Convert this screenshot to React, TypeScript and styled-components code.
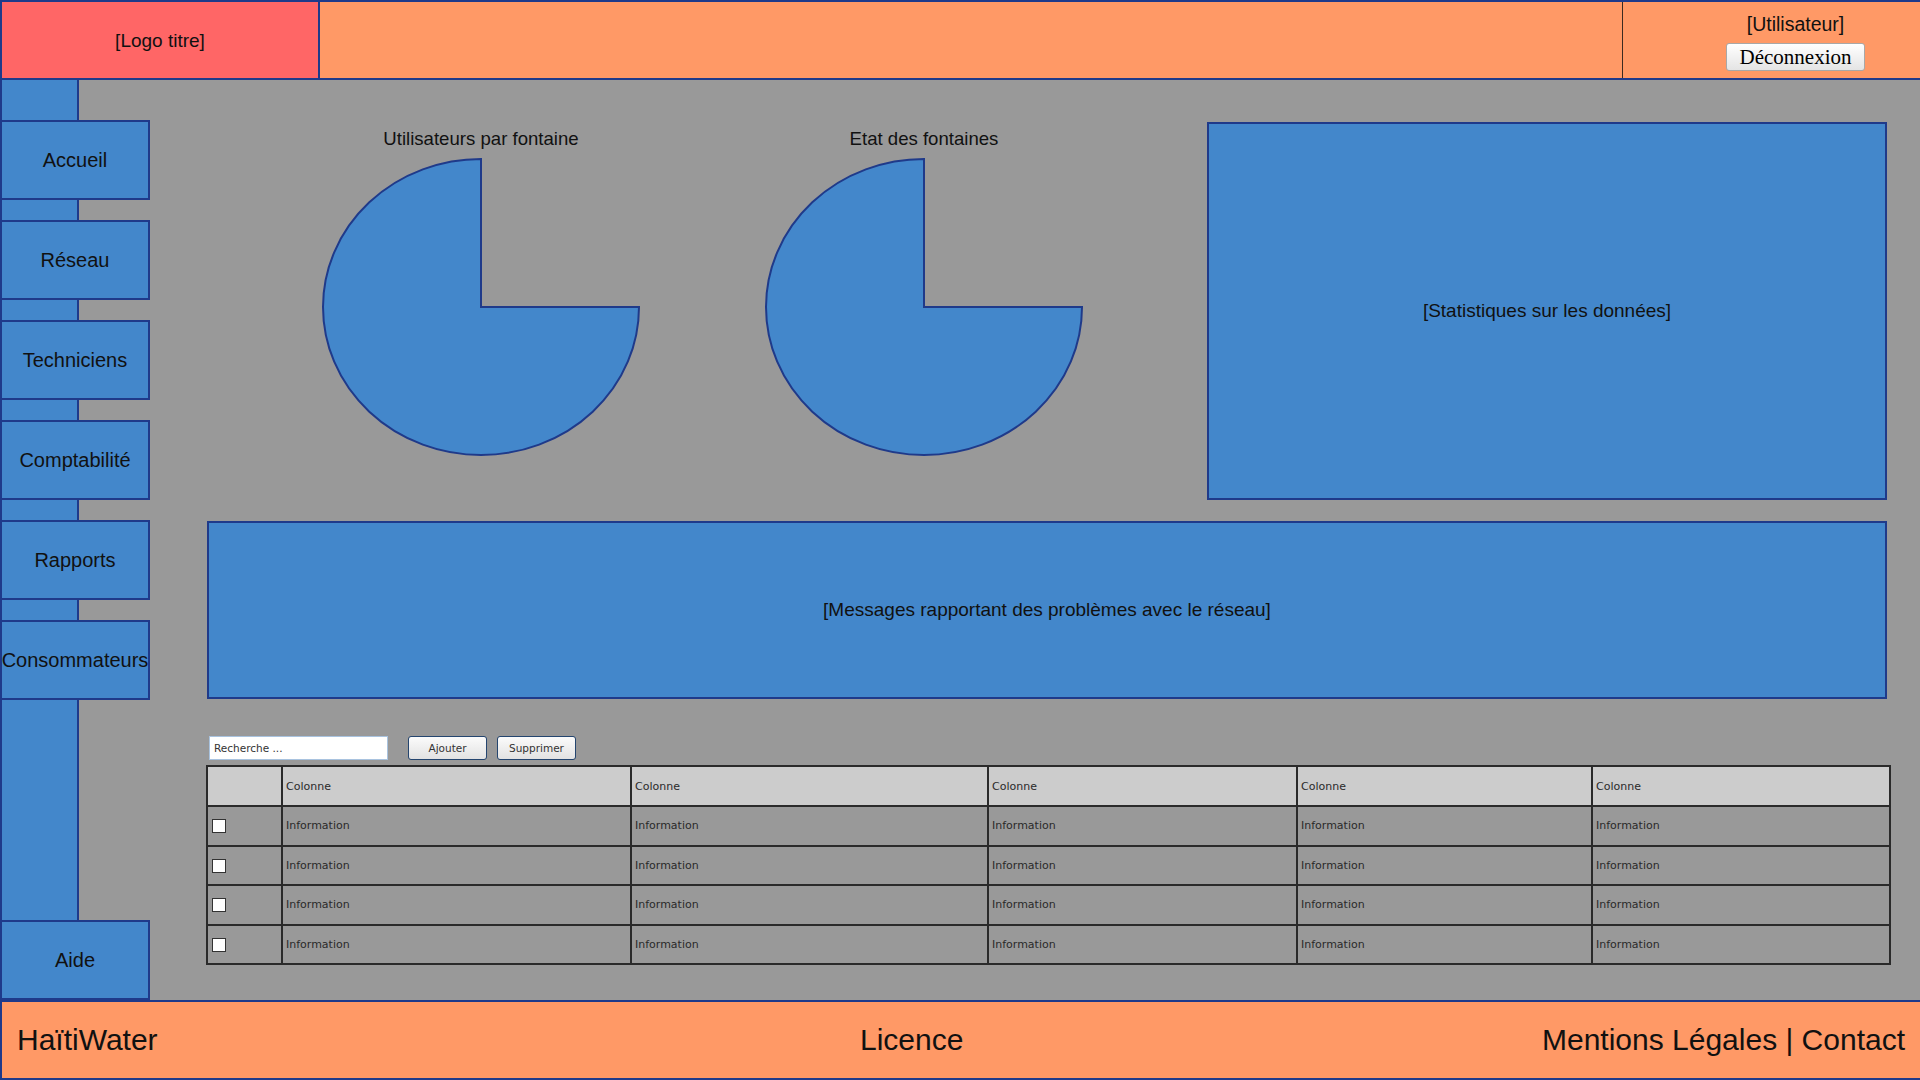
import React from "react";
import styled, { createGlobalStyle } from "styled-components";

const BLUE = "#4387cb";
const DARK = "#1f3a8a";
const ORANGE = "#ff9966";
const RED = "#ff6666";
const GRAY = "#999999";

const Global = createGlobalStyle`
  html, body { margin: 0; padding: 0; }
  body {
    width: 1920px;
    height: 1080px;
    overflow: hidden;
    background: ${GRAY};
    font-family: "Liberation Sans", Arial, sans-serif;
    color: #111;
  }
  * { box-sizing: border-box; }
`;

const Page = styled.div`
  width: 1920px;
  height: 1080px;
  display: grid;
  grid-template-rows: 80px 920px 80px;
  background: ${GRAY};
`;

const Header = styled.header`
  display: flex;
  border: 2px solid ${DARK};
  background: ${ORANGE};
`;

const Logo = styled.div`
  width: 318px;
  display: flex;
  align-items: center;
  justify-content: center;
  padding-top: 2px;
  background: ${RED};
  border-right: 2px solid ${DARK};
  font-size: 19px;
`;

const HeaderSpacer = styled.div`
  flex: 1;
`;

const UserPanel = styled.div`
  width: 298px;
  border-left: 1px solid #3b2a20;
  display: flex;
  flex-direction: column;
  align-items: center;
  padding: 11px 0 0 48px;
  gap: 8px;
`;

const UserName = styled.div`
  font-size: 19.5px;
  line-height: 22px;
`;

const LogoutButton = styled.button`
  width: 139px;
  height: 28px;
  padding: 0;
  font-family: "Liberation Serif", "Times New Roman", serif;
  font-size: 21px;
  line-height: 26px;
  color: #000;
  background: linear-gradient(#ffffff, #e4e4e4);
  border: 1px solid #a8a8a8;
  border-radius: 3px;
`;

const Middle = styled.div`
  display: grid;
  grid-template-columns: 150px 1fr;
  min-height: 0;
`;

const Sidebar = styled.nav`
  display: flex;
  flex-direction: column;
  gap: 20px;
  padding-top: 40px;
  background: linear-gradient(
    to right,
    ${DARK} 0 2px,
    ${BLUE} 2px 77px,
    ${DARK} 77px 79px,
    transparent 79px
  );
`;

const NavButton = styled.div<{ $bottom?: boolean }>`
  height: 80px;
  width: 150px;
  flex-shrink: 0;
  display: flex;
  align-items: center;
  justify-content: center;
  background: ${BLUE};
  border: 2px solid ${DARK};
  font-size: 20px;
  white-space: nowrap;
  ${(p) => (p.$bottom ? "margin-top: auto;" : "")}
`;

const Main = styled.main`
  padding: 42px 31px 0 57px;
  display: flex;
  flex-direction: column;
`;

const TopRow = styled.div`
  height: 378px;
  display: flex;
  padding-left: 114px;
  gap: 123px;
`;

const Chart = styled.div`
  width: 320px;
  display: flex;
  flex-direction: column;
  align-items: center;
  padding-top: 6px;
  gap: 8px;
`;

const ChartTitle = styled.div`
  font-size: 18.6px;
  line-height: 21px;
  white-space: nowrap;
`;

const Panel = styled.div<{ $w?: number; $h: number }>`
  ${(p) => (p.$w ? `width: ${p.$w}px;` : "")}
  height: ${(p) => p.$h}px;
  background: ${BLUE};
  border: 2px solid ${DARK};
  display: flex;
  align-items: center;
  justify-content: center;
  font-size: 19px;
`;

const StatsPanel = styled(Panel)`
  margin-left: auto;
  margin-right: 4px;
`;

const MessagesPanel = styled(Panel)`
  margin-top: 21px;
  margin-right: 4px;
`;

const Toolbar = styled.div`
  margin-top: 37px;
  height: 24px;
  display: flex;
  align-items: center;
  padding-left: 2px;
`;

const SearchInput = styled.input`
  width: 179px;
  height: 24px;
  border: 1px solid #a9c3df;
  background: #fff;
  padding: 0 4px;
  font-family: "DejaVu Sans", sans-serif;
  font-size: 10.5px;
  color: #333;
  outline: none;
  &::placeholder { color: #333; }
`;

const ToolButton = styled.button<{ $ml: number }>`
  margin-left: ${(p) => p.$ml}px;
  width: 79px;
  height: 24px;
  padding: 0;
  border: 1px solid #24456f;
  border-radius: 3px;
  background: linear-gradient(#fbfbfb, #e2e2e2);
  font-family: "DejaVu Sans", sans-serif;
  font-size: 10.5px;
  color: #333;
`;

const Table = styled.table`
  margin-top: 5px;
  margin-left: -1px;
  width: 1683px;
  border-collapse: collapse;
  table-layout: fixed;
  border: 2px solid #2a2a2a;
  font-family: "DejaVu Sans", sans-serif;
  font-size: 11px;
  color: #2a2a2a;
`;

const HeadCell = styled.th`
  height: 40px;
  background: #cccccc;
  border: 2px solid #2a2a2a;
  border-top: none;
  text-align: left;
  font-weight: normal;
  padding: 0 0 0 3px;
`;

const Cell = styled.td`
  height: 39.5px;
  border: 2px solid #2a2a2a;
  padding: 0 0 0 3px;
  background: ${GRAY};
`;

const Check = styled.span`
  display: inline-block;
  width: 14px;
  height: 14px;
  margin-left: 1px;
  margin-top: 1px;
  background: #fff;
  border: 1px solid #333;
  vertical-align: middle;
`;

const Footer = styled.footer`
  display: grid;
  grid-template-columns: 843px auto 1fr;
  align-items: center;
  padding: 0 15px 0 15px;
  border: 2px solid ${DARK};
  background: ${ORANGE};
  font-size: 30px;
  color: #111;
`;

const FooterRight = styled.div`
  text-align: right;
`;

const Pie: React.FC = () => {
  const cx = 160;
  const cy = 150;
  const rx = 158;
  const ry = 148;
  return (
    <svg width="320" height="300" viewBox="0 0 320 300">
      <path
        d={`M ${cx} ${cy} L ${cx} ${cy - ry} A ${rx} ${ry} 0 1 0 ${cx + rx} ${cy} Z`}
        fill={BLUE}
        stroke={DARK}
        strokeWidth="2"
        strokeLinejoin="miter"
      />
    </svg>
  );
};

const navItems = ["Accueil", "Réseau", "Techniciens", "Comptabilité", "Rapports", "Consommateurs"];
const colWidths = [75, 349, 357, 309, 295, 298];

export default function App() {
  return (
    <>
      <Global />
      <Page>
        <Header>
          <Logo>[Logo titre]</Logo>
          <HeaderSpacer />
          <UserPanel>
            <UserName>[Utilisateur]</UserName>
            <LogoutButton>Déconnexion</LogoutButton>
          </UserPanel>
        </Header>
        <Middle>
          <Sidebar>
            {navItems.map((n) => (
              <NavButton key={n}>{n}</NavButton>
            ))}
            <NavButton $bottom>Aide</NavButton>
          </Sidebar>
          <Main>
            <TopRow>
              <Chart>
                <ChartTitle>Utilisateurs par fontaine</ChartTitle>
                <Pie />
              </Chart>
              <Chart>
                <ChartTitle>Etat des fontaines</ChartTitle>
                <Pie />
              </Chart>
              <StatsPanel $w={680} $h={378}>[Statistiques sur les données]</StatsPanel>
            </TopRow>
            <MessagesPanel $h={178}>[Messages rapportant des problèmes avec le réseau]</MessagesPanel>
            <Toolbar>
              <SearchInput placeholder="Recherche ..." readOnly />
              <ToolButton $ml={20}>Ajouter</ToolButton>
              <ToolButton $ml={10}>Supprimer</ToolButton>
            </Toolbar>
            <Table>
              <colgroup>
                {colWidths.map((w, i) => (
                  <col key={i} style={{ width: w }} />
                ))}
              </colgroup>
              <thead>
                <tr>
                  <HeadCell />
                  {[0, 1, 2, 3, 4].map((i) => (
                    <HeadCell key={i}>Colonne</HeadCell>
                  ))}
                </tr>
              </thead>
              <tbody>
                {[0, 1, 2, 3].map((r) => (
                  <tr key={r}>
                    <Cell>
                      <Check />
                    </Cell>
                    {[0, 1, 2, 3, 4].map((i) => (
                      <Cell key={i}>Information</Cell>
                    ))}
                  </tr>
                ))}
              </tbody>
            </Table>
          </Main>
        </Middle>
        <Footer>
          <div>HaïtiWater</div>
          <div>Licence</div>
          <FooterRight>Mentions Légales | Contact</FooterRight>
        </Footer>
      </Page>
    </>
  );
}
